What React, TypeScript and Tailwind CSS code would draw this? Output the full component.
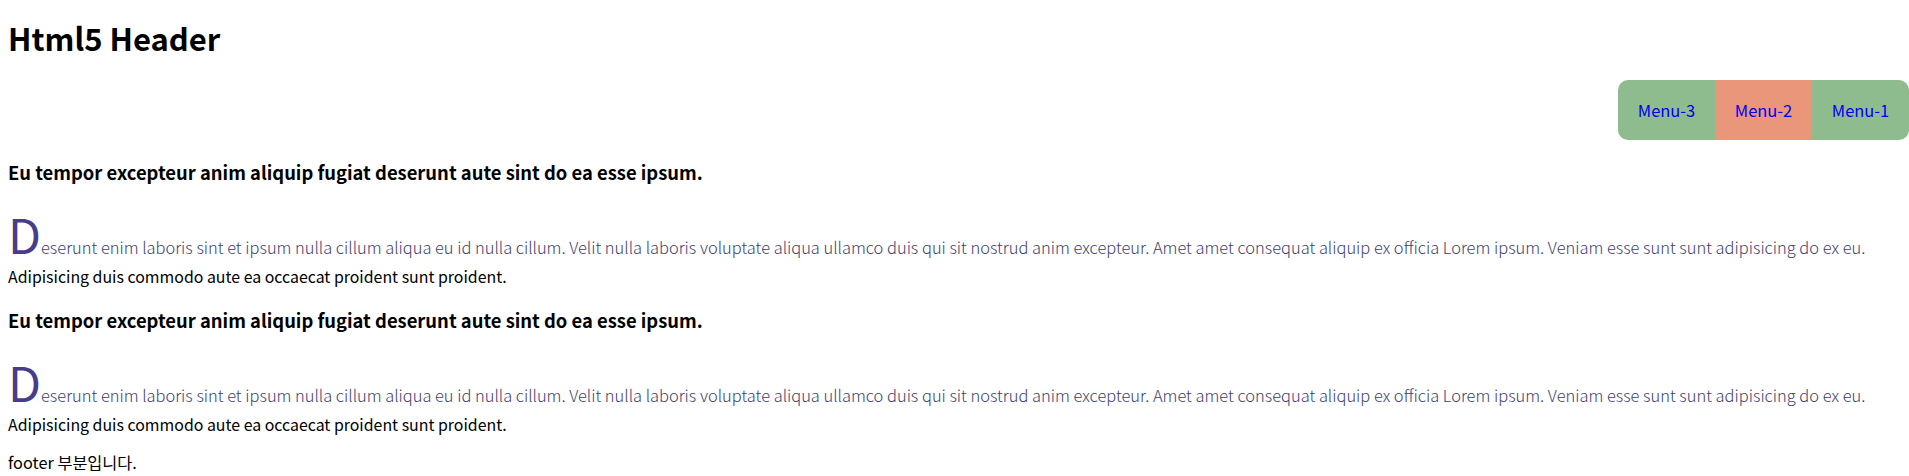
import React from 'react';

const menus = ['Menu-1', 'Menu-2', 'Menu-3'];

const heading = 'Eu tempor excepteur anim aliquip fugiat deserunt aute sint do ea esse ipsum.';
const body =
  'Deserunt enim laboris sint et ipsum nulla cillum aliqua eu id nulla cillum. Velit nulla laboris voluptate aliqua ullamco duis qui sit nostrud anim excepteur. Amet amet consequat aliquip ex officia Lorem ipsum. Veniam esse sunt sunt adipisicing do ex eu. Adipisicing duis commodo aute ea occaecat proident sunt proident.';

function Article() {
  return (
    <article>
      <h3 className="text-[18.4px] font-bold leading-[24px]">{heading}</h3>
      <p className="mt-[35px] text-[15.9px] leading-[29px] first-line:text-[16.45px] first-line:font-light first-line:text-[#403e6c] first-letter:text-[48px] first-letter:font-normal first-letter:text-[#483d8b]">
        {body}
      </p>
    </article>
  );
}

export default function App() {
  return (
    <div className="min-h-screen bg-white px-2 text-black font-['Noto_Sans_CJK_KR','Noto_Sans',sans-serif]">
      <header className="pt-[18px]">
        <h1 className="text-[31px] font-bold leading-[40px]">Html5 Header</h1>
        <nav className="-mr-2 mt-[22px] flex justify-end">
          <ul className="flex flex-row-reverse overflow-hidden rounded-[10px]">
            {menus.map((m, i) => (
              <li
                key={m}
                className={
                  'flex h-[60px] w-[97px] items-center justify-center text-[16.5px] ' +
                  (i === 1 ? 'bg-[#e9967a]' : 'bg-[#8fbc8f]')
                }
              >
                <a href="#" className="text-[#0000ee]">
                  {m}
                </a>
              </li>
            ))}
          </ul>
        </nav>
      </header>

      <main className="mt-[20px] flex flex-col gap-[17px]">
        <Article />
        <Article />
      </main>

      <footer className="mt-[12px] text-[16.3px] leading-[22px]">footer 부분입니다.</footer>
    </div>
  );
}
